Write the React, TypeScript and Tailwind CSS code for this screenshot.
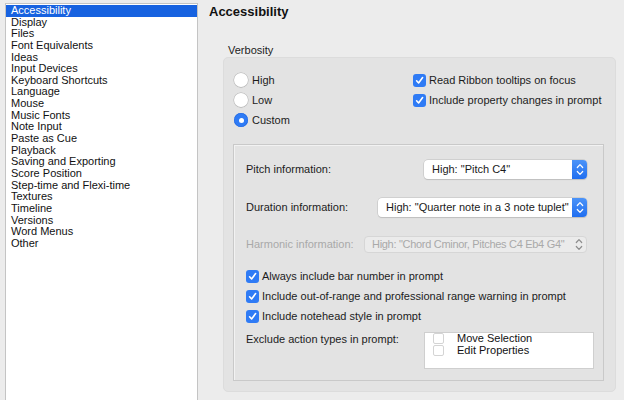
import React from "react";

const categories = [
  "Accessibility",
  "Display",
  "Files",
  "Font Equivalents",
  "Ideas",
  "Input Devices",
  "Keyboard Shortcuts",
  "Language",
  "Mouse",
  "Music Fonts",
  "Note Input",
  "Paste as Cue",
  "Playback",
  "Saving and Exporting",
  "Score Position",
  "Step-time and Flexi-time",
  "Textures",
  "Timeline",
  "Versions",
  "Word Menus",
  "Other",
];

function Radio({ checked, label }: { checked?: boolean; label: string }) {
  return (
    <div className="flex h-[20px] items-center">
      {checked ? (
        <span className="flex h-[14px] w-[14px] items-center justify-center rounded-full bg-[#2f7bf5] shadow-[inset_0_0_0_0.5px_#1f66e0]">
          <span className="h-[5px] w-[5px] rounded-full bg-white" />
        </span>
      ) : (
        <span className="h-[14px] w-[14px] rounded-full bg-white shadow-[0_0_0_0.5px_#b3b3b3,0_0.5px_1px_rgba(0,0,0,0.2)]" />
      )}
      <span className="ml-[4px]">{label}</span>
    </div>
  );
}

function Check({ label }: { label: string }) {
  return (
    <div className="flex h-[20px] items-center">
      <span className="flex h-[13px] w-[13px] items-center justify-center rounded-[3px] bg-[#2f7bf5]">
        <svg width="9" height="9" viewBox="0 0 9 9" fill="none">
          <path d="M1.6 4.8 L3.6 7 L7.6 1.6" stroke="white" strokeWidth="1.6" strokeLinecap="round" strokeLinejoin="round" />
        </svg>
      </span>
      <span className="ml-[3px]">{label}</span>
    </div>
  );
}

function Stepper({ disabled }: { disabled?: boolean }) {
  const color = disabled ? "#8c8c8c" : "white";
  return (
    <svg width="8" height="13" viewBox="0 0 8 13" fill="none">
      <path d="M1.3 4.5 L4 1.6 L6.7 4.5" stroke={color} strokeWidth="1.2" strokeLinecap="round" strokeLinejoin="round" />
      <path d="M1.3 8.5 L4 11.4 L6.7 8.5" stroke={color} strokeWidth="1.2" strokeLinecap="round" strokeLinejoin="round" />
    </svg>
  );
}

function Select({ value, width }: { value: string; width: string }) {
  return (
    <div className={`flex h-[19px] ${width} items-stretch rounded-[4px] bg-white shadow-[0_0_0_0.5px_#bdbdbd,0_1px_1px_rgba(0,0,0,0.15)]`}>
      <span className="flex-1 whitespace-nowrap pl-[8px] leading-[19px] text-[#1a1a1a]">{value}</span>
      <span className="flex w-[15px] items-center justify-center rounded-r-[4px] bg-gradient-to-b from-[#4b93f8] to-[#1f6ef0]">
        <Stepper />
      </span>
    </div>
  );
}

export default function App() {
  return (
    <div
      className="flex h-[400px] w-[624px] overflow-hidden bg-[#ececec] text-[11px] text-[#1c1c1c]"
      style={{ fontFamily: '"Liberation Sans", Arial, sans-serif' }}
    >
      {/* category list */}
      <div className="ml-[5px] mt-[3px] h-[420px] w-[193px] shrink-0 border border-[#c4c4c4] bg-white pt-[1px]">
        {categories.map((c, i) => (
          <div
            key={c}
            className={`h-[11.65px] whitespace-nowrap pl-[5px] leading-[11.65px] ${
              i === 0 ? "bg-[#1762e0] text-white" : "text-[#111]"
            }`}
          >
            {c}
          </div>
        ))}
      </div>

      {/* settings pane */}
      <div className="flex flex-1 flex-col">
        <div className="ml-[11px] mt-[4px] text-[13px] font-bold leading-[16px] text-[#111]">Accessibility</div>
        <div className="ml-[30px] mt-[23px] leading-[14px]">Verbosity</div>

        <div className="ml-[25px] h-[335px] w-[393px] rounded-[5px] border border-[#dcdcdc] bg-[#e3e3e3]">
          <div className="flex pt-[12px]">
            <div className="ml-[10px] w-[179px] flex-col">
              <Radio label="High" />
              <Radio label="Low" />
              <Radio checked label="Custom" />
            </div>
            <div className="flex flex-col">
              <Check label="Read Ribbon tooltips on focus" />
              <Check label="Include property changes in prompt" />
            </div>
          </div>

          {/* custom options */}
          <div className="ml-[9px] mt-[14px] h-[237px] w-[371px] border border-[#c9c9c9] bg-[#e3e3e3] pl-[12px] pr-[16px] pt-[14px] shadow-[inset_1px_1px_0_#f2f2f2]">
            <div className="flex h-[20px] items-center justify-between">
              <span>Pitch information:</span>
              <Select value={'High: "Pitch C4"'} width="w-[163px]" />
            </div>
            <div className="mt-[18px] flex h-[20px] items-center justify-between">
              <span>Duration information:</span>
              <Select value={'High: "Quarter note in a 3 note tuplet"'} width="w-[209px]" />
            </div>
            <div className="mt-[17px] flex h-[20px] items-center justify-between text-[#a9a9a9]">
              <span>Harmonic information:</span>
              <div className="flex h-[17px] w-[223px] items-center rounded-[4px] border border-[#d6d6d6] bg-[#ebebeb]">
                <span className="flex-1 whitespace-nowrap pl-[7px] tracking-[-0.3px]">
                  {'High: "Chord Cminor, Pitches C4 Eb4 G4"'}
                </span>
                <span className="flex w-[15px] items-center justify-center">
                  <Stepper disabled />
                </span>
              </div>
            </div>

            <div className="mt-[12px]">
              <Check label="Always include bar number in prompt" />
              <Check label="Include out-of-range and professional range warning in prompt" />
              <Check label="Include notehead style in prompt" />
            </div>

            <div className="mt-[6px] flex justify-between">
              <span className="leading-[14px]">Exclude action types in prompt:</span>
              <div className="mr-[-7px] h-[37px] w-[170px] overflow-hidden border border-[#cfcfcf] bg-white">
                <div className="mt-[-1px] flex h-[12px] items-center">
                  <span className="ml-[8px] h-[11px] w-[11px] rounded-[2px] border border-[#d4d4d4] bg-white" />
                  <span className="ml-[13px] text-[#111]">Move Selection</span>
                </div>
                <div className="flex h-[12px] items-center">
                  <span className="ml-[8px] h-[11px] w-[11px] rounded-[2px] border border-[#d4d4d4] bg-white" />
                  <span className="ml-[13px] text-[#111]">Edit Properties</span>
                </div>
              </div>
            </div>
          </div>
        </div>
      </div>
    </div>
  );
}
